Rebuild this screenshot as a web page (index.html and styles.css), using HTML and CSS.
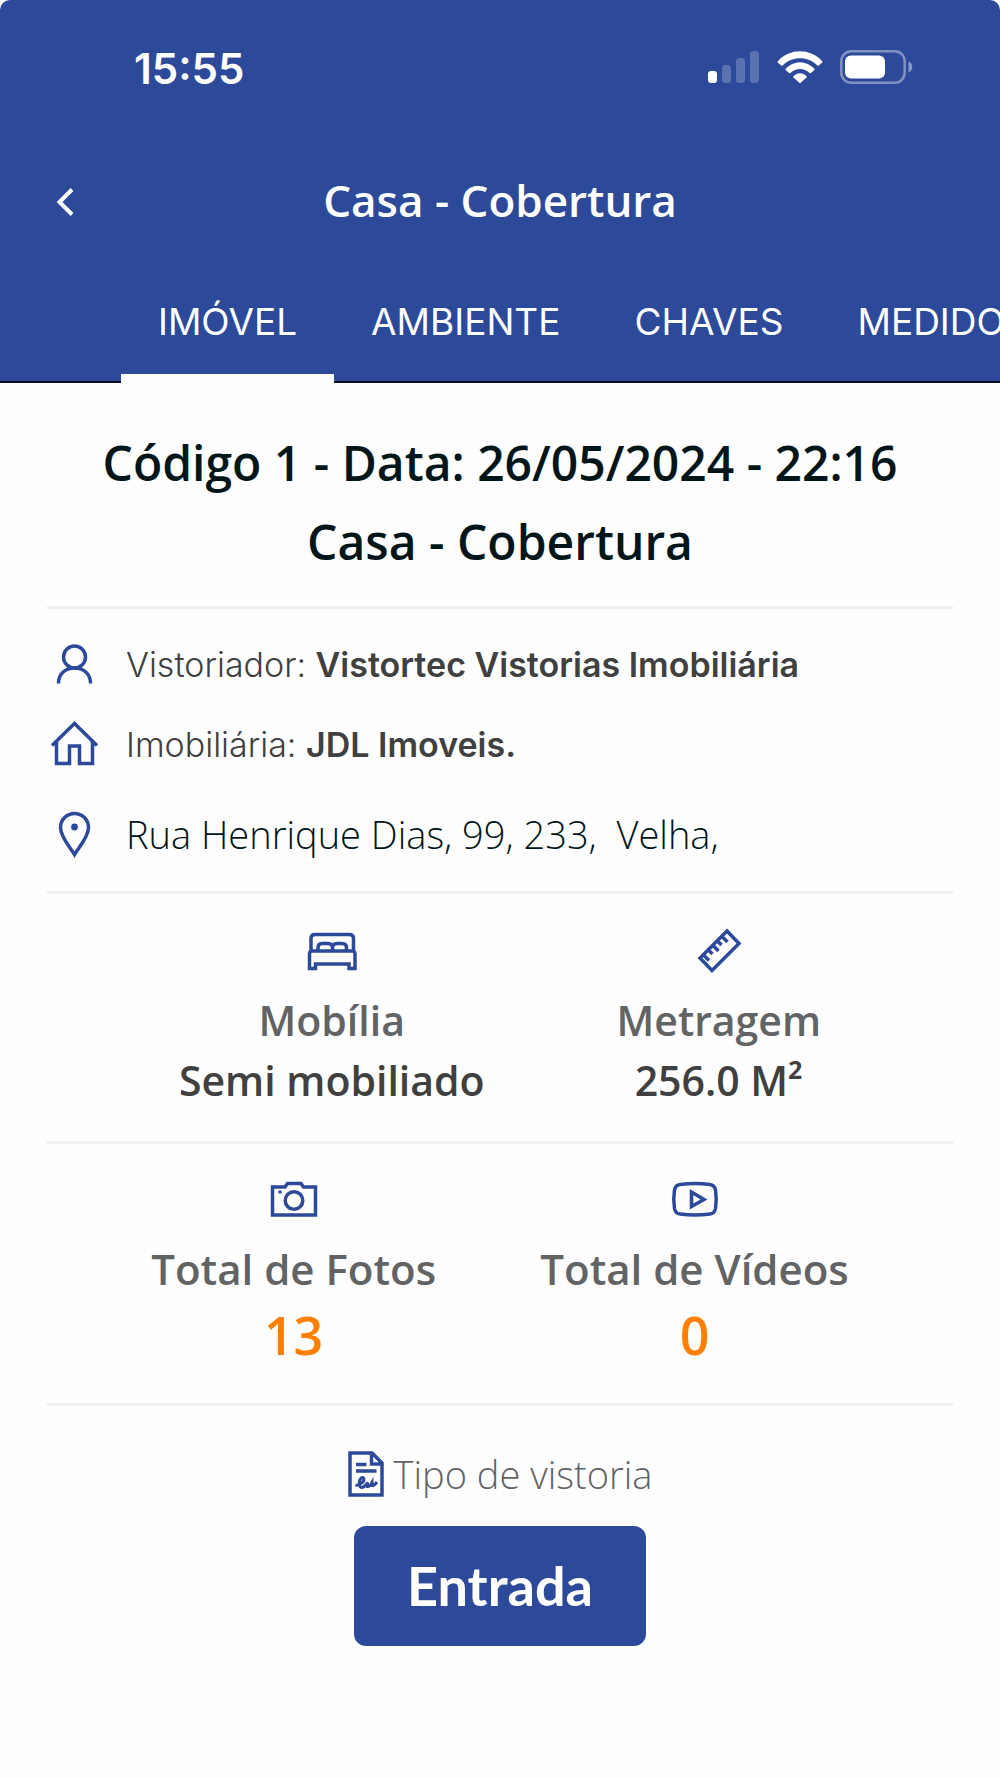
FILE: index.html
```html
<!DOCTYPE html>
<html lang="pt-BR">
<head>
<meta charset="utf-8">
<meta name="viewport" content="width=device-width, initial-scale=1">
<title>Casa - Cobertura</title>
<link rel="stylesheet" href="styles.css">
</head>
<body>
<header class="header">
  <div class="status">
    <time class="clock">15:55</time>
    <div class="indicators">
      <svg width="52" height="34" viewBox="0 0 52 34" fill="#fff" aria-hidden="true">
        <rect x="0" y="21" width="9" height="12" rx="3"/>
        <g opacity=".22"><rect x="14" y="15" width="9" height="18" rx="3"/><rect x="28" y="8" width="9" height="25" rx="3"/><rect x="42" y="1" width="9" height="32" rx="3"/></g>
      </svg>
      <svg width="46" height="34" viewBox="0 0 46 34" fill="#fff" aria-hidden="true">
        <path d="M.8 11.200C13-2 33-2 45.200 11.200Q45.800 12 45.200 12.600L41.800 15.500Q41.100 16 40.400 15.400C30.500 5.800 15.500 5.800 5.600 15.400Q4.900 16 4.200 15.500L.8 12.600Q.2 12 .8 11.200Z"/>
        <path d="M8.600 18.800C16.500 10 29.500 10 37.400 18.800Q37.900 19.400 37.300 20L34 23Q33.300 23.500 32.600 22.900C27 17.600 19 17.600 13.400 22.900Q12.700 23.500 12 23L8.700 20Q8.100 19.400 8.600 18.800Z"/>
        <path d="M16.400 26.200C20 22.300 26 22.300 29.600 26.200Q30.100 26.800 29.500 27.400L23.700 32.800Q23 33.400 22.300 32.800L16.500 27.400Q15.900 26.800 16.400 26.200Z"/>
      </svg>
      <svg width="74" height="34" viewBox="0 0 74 34" fill="#fff" aria-hidden="true">
        <rect x="1.300" y="1.300" width="63.400" height="31.400" rx="10" fill="none" stroke="#fff" stroke-width="2.500" opacity=".4"/>
        <rect x="5" y="5.500" width="40" height="23" rx="6"/>
        <path d="M68.500 11.500C73.500 13 73.500 21 68.500 22.500Z" opacity=".45"/>
      </svg>
    </div>
  </div>
  <div class="appbar">
    <button class="back" type="button" aria-label="Voltar">
      <svg width="18" height="28" viewBox="0 0 18 28" fill="none" stroke="#fff" stroke-width="4" aria-hidden="true"><path d="M16 1.500 3.500 14 16 26.500"/></svg>
    </button>
    <div class="title">Casa - Cobertura</div>
  </div>
  <nav class="tabs">
    <a class="tab active" href="#imovel" aria-current="page">IMÓVEL</a>
    <a class="tab" href="#ambiente">AMBIENTE</a>
    <a class="tab" href="#chaves">CHAVES</a>
    <a class="tab" href="#medidores">MEDIDORES</a>
  </nav>
</header>
<main class="content" id="imovel">
  <h1 class="heading">Código 1 - Data: 26/05/2024 - 22:16<br>Casa - Cobertura</h1>
  <section class="info">
    <div class="row">
      <svg class="icon" width="48" height="48" viewBox="0 0 48 48" aria-hidden="true"><circle cx="24.500" cy="16" r="11"/><path d="M8.500 42.500C8.500 33 15 27 24.500 27S40.500 33 40.500 42.500"/></svg>
      <p class="text">Vistoriador: <b>Vistortec Vistorias Imobiliária</b></p>
    </div>
    <div class="row">
      <svg class="icon" width="48" height="48" viewBox="0 0 48 48" aria-hidden="true"><path d="M2 24.500 24.500 2.500 47 24.500M6.500 21V42.500H19.500V25H29.500V42.500H42.500V21"/></svg>
      <p class="text">Imobiliária: <b>JDL Imoveis.</b></p>
    </div>
    <div class="row address">
      <svg class="icon" width="48" height="48" viewBox="0 0 48 48" aria-hidden="true"><path d="M24.500 44.500C20 37 10.500 27 10.500 17.500a14 14 0 0 1 28 0C38.500 27 29 37 24.500 44.500Z"/><circle class="solid" cx="24.500" cy="17" r="3.400"/></svg>
      <p class="text">Rua Henrique Dias, 99, 233,&nbsp; Velha,</p>
    </div>
  </section>
  <section class="stats">
    <div class="stat">
      <svg class="icon" width="52" height="48" viewBox="0 0 52 48" aria-hidden="true"><path d="M5 24V12.500Q5 8.500 9 8.500H43Q47.500 8.500 47.500 12.500V24M12 25V22Q12 17.500 16 17.500H22Q26.500 17.500 26.500 22V25M26.500 22Q26.500 17.500 31 17.500H36Q40.500 17.500 40.500 22V25M6 25H46.500Q49 25 49 28V42.500H43V38H9.500V42.500H3.500V28Q3.500 25 6 25Z"/></svg>
      <div class="label">Mobília</div>
      <div class="value">Semi mobiliado</div>
    </div>
    <div class="stat">
      <svg class="icon" width="48" height="48" viewBox="0 0 48 48" aria-hidden="true"><path d="M32 5 44 17.500 17 44.500 5 32ZM8.500 29 14 34.500M13.500 24 17.500 28M18 19.500 23.500 25M22.500 15 26.500 19M27 10.500 32.500 16"/></svg>
      <div class="label">Metragem</div>
      <div class="value">256.0 M²</div>
    </div>
  </section>
  <section class="stats totals">
    <div class="stat">
      <svg class="icon" width="48" height="48" viewBox="0 0 48 48" aria-hidden="true"><path d="M2.500 12H15L17.500 8.500H31L33.500 12H45.500V40H2.500Z"/><circle cx="24" cy="25.500" r="8.800"/><circle class="solid" cx="10" cy="17" r="1.800"/></svg>
      <div class="label">Total de Fotos</div>
      <div class="value">13</div>
    </div>
    <div class="stat">
      <svg class="icon" width="48" height="48" viewBox="0 0 48 48" aria-hidden="true"><path d="M9 9.500Q24 7.500 39 9.500Q43.500 10 44.500 15Q46 24 44.500 33.500Q43.500 38.500 39 39Q24 41 9 39Q4.500 38.500 3.500 33.500Q2 24 3.500 15Q4.500 10 9 9.500ZM20.500 17V31.500L33 24.500Z"/></svg>
      <div class="label">Total de Vídeos</div>
      <div class="value">0</div>
    </div>
  </section>
  <section class="kind">
    <div class="kind-label">
      <svg class="icon" width="36" height="48" viewBox="0 0 36 48" aria-hidden="true"><path d="M2 3H24L34 13V45H2ZM23.500 3V14H34M8 14.500H18.500M8 21H28.500"/><path stroke-width="3" d="M7.500 35.500C13 35 17 31 15.700 28.300C14.300 26 10.500 29.500 11.300 34.500C12 39.500 17 37.500 19.500 32.500V36.500Q21.500 37 24 32.500V35.500Q26 36 29 32"/></svg>
      <span>Tipo de vistoria</span>
    </div>
    <button class="entry" type="button">Entrada</button>
  </section>
</main>
</body>
</html>
```
FILE: styles.css
```css
* { box-sizing: border-box; }
body {
  margin: 0;
  background: #fefefe;
  font-family: "Open Sans", "Noto Sans", sans-serif;
  color: #02161a;
  overflow-x: hidden;
}
.header {
  background: #2c4a99;
  color: #fff;
  border-bottom: 2px solid #0b0d20;
  border-radius: 10px 10px 0 0;
}
.status {
  height: 136px;
  padding: 2px 86px 0 134px;
  display: flex;
  align-items: center;
  justify-content: space-between;
}
.clock { font: 600 42px/48px Inter, sans-serif; }
.indicators { display: flex; gap: 17px; padding-bottom: 4px; }
.appbar {
  height: 134px;
  padding: 0 39px 2px;
  display: grid;
  grid-template-columns: 52px 1fr 52px;
  align-items: center;
}
.back {
  height: 52px;
  padding: 0;
  border: 0;
  background: none;
  display: grid;
  place-items: center;
}
.title {
  padding-bottom: 4px;
  font-size: 44px;
  font-weight: 600;
  line-height: 60px;
  text-align: center;
}
.tabs {
  display: flex;
  padding-left: 121px;
  margin-bottom: -3px;
  overflow: hidden;
}
.tab {
  flex: none;
  padding: 30px 37px;
  border-bottom: 10px solid transparent;
  color: #fff;
  font: 400 37px/44px Inter, sans-serif;
  text-decoration: none;
}
.active { border-color: #fefefe; }
.content { padding: 0 47px; }
.heading {
  margin: 0;
  padding: 40px 0 25px;
  font-size: 48px;
  font-weight: 600;
  line-height: 79px;
  text-align: center;
}
.icon {
  flex: none;
  fill: none;
  stroke: #2c4a99;
  stroke-width: 3.5;
}
.solid { fill: #2c4a99; stroke: none; }
.info, .stats, .kind { border-top: 3px solid #f0f0f0; }
.info { padding: 16px 0 17px; }
.row {
  display: flex;
  align-items: center;
  gap: 28px;
  padding-left: 3px;
  color: #404040;
  font: 300 34px/80px Inter, sans-serif;
}
.text { margin: 0; }
.text b { font-weight: 600; }
.address {
  padding-top: 9px;
  color: #02161a;
  font: 350 38px/80px "Open Sans", sans-serif;
}
.stats {
  display: flex;
  justify-content: space-evenly;
  padding: 32px 0 30px;
  text-align: center;
}
.stat { display: flex; flex-direction: column; align-items: center; }
.label {
  padding-top: 16px;
  color: #626365;
  font-size: 41px;
  font-weight: 600;
  line-height: 60px;
}
.value {
  padding-bottom: 1px;
  color: #404040;
  font-size: 41px;
  font-weight: 600;
  line-height: 60px;
}
.totals { padding: 31px 0; }
.totals .label { font-size: 42px; }
.totals .value { color: #ff8000; font-size: 52px; line-height: 72px; }
.kind {
  display: flex;
  flex-direction: column;
  align-items: center;
  gap: 22px;
  padding: 38px 0 100px;
}
.kind-label {
  display: flex;
  align-items: center;
  gap: 10px;
  color: #626365;
  font-size: 38px;
  font-weight: 350;
  line-height: 60px;
}
.entry {
  padding: 24px 53px;
  border: 0;
  border-radius: 12px;
  background: #2c4a99;
  color: #fff;
  font: 700 54px/72px Lato, sans-serif;
}
```
